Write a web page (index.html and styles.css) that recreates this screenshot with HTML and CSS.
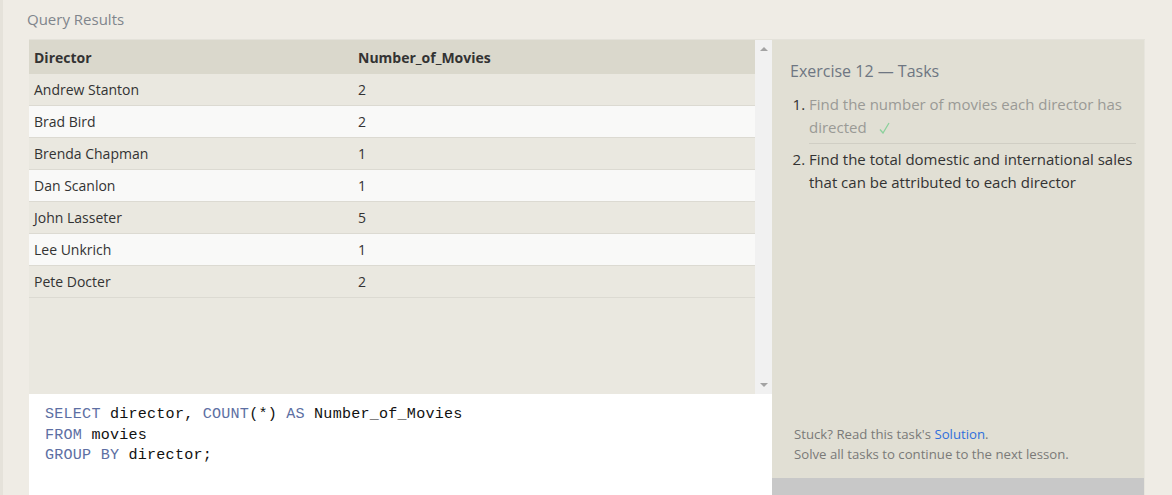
FILE: index.html
```html
<!DOCTYPE html>
<html lang="en">
<head>
<meta charset="utf-8">
<title>Query Results</title>
<link rel="stylesheet" href="styles.css">
</head>
<body>
<div class="page">
  <h2 class="title">Query Results</h2>
  <div class="workspace">
    <div class="left">
      <div class="results">
        <div class="table-wrap">
          <table class="grid">
            <colgroup><col class="c1"><col class="c2"></colgroup>
            <thead>
              <tr><th>Director</th><th>Number_of_Movies</th></tr>
            </thead>
            <tbody>
              <tr><td>Andrew Stanton</td><td>2</td></tr>
              <tr><td>Brad Bird</td><td>2</td></tr>
              <tr><td>Brenda Chapman</td><td>1</td></tr>
              <tr><td>Dan Scanlon</td><td>1</td></tr>
              <tr><td>John Lasseter</td><td>5</td></tr>
              <tr><td>Lee Unkrich</td><td>1</td></tr>
              <tr><td>Pete Docter</td><td>2</td></tr>
            </tbody>
          </table>
        </div>
        <div class="scrollbar">
          <span class="arrow up"></span>
          <span class="arrow down"></span>
        </div>
      </div>
      <div class="editor">
<pre class="code"><span class="kw">SELECT</span> director, <span class="kw">COUNT</span>(*) <span class="kw">AS</span> Number_of_Movies
<span class="kw">FROM</span> movies
<span class="kw">GROUP BY</span> director;</pre>
      </div>
    </div>
    <div class="tasks">
      <div class="tasks-body">
        <h3 class="tasks-title">Exercise 12 — Tasks</h3>
        <ol class="task-list">
          <li class="done">Find the number of movies each director has directed<svg class="check" width="11" height="12" viewBox="0 0 11 12" aria-label="done"><path d="M1 7.5 L4 11 L10 1" fill="none" stroke="#8cd19c" stroke-width="1.3"/></svg></li>
          <li>Find the total domestic and international sales that can be attributed to each director</li>
        </ol>
        <div class="help">
          <p>Stuck? Read this task's <a href="#" class="link">Solution</a>.</p>
          <p>Solve all tasks to continue to the next lesson.</p>
        </div>
      </div>
      <div class="tasks-bar"></div>
    </div>
  </div>
</div>
</body>
</html>
```

FILE: styles.css
```css
html, body {
  margin: 0;
  padding: 0;
  height: 100%;
  overflow: hidden;
}

body {
  background: #efece5;
  font-family: "Open Sans", "Noto Sans", sans-serif;
  color: #333;
  border-left: 3px solid #e5e2da;
  box-sizing: border-box;
}

.page {
  padding-left: 26px;
}

.title {
  margin: 0 0 0 -2px;
  height: 39px;
  padding-top: 8px;
  box-sizing: border-box;
  font-size: 15px;
  font-weight: 400;
  line-height: 22px;
  color: #80858c;
}

.workspace {
  display: flex;
  width: 1116px;
  height: 456px;
  border-top: 1px solid #e4e2da;
  box-sizing: border-box;
}

.left {
  width: 743px;
  display: flex;
  flex-direction: column;
}

.results {
  height: 354px;
  display: flex;
  background: #eae8e0;
}

.table-wrap {
  flex: 1;
  overflow: hidden;
}

.grid {
  width: 726px;
  table-layout: fixed;
  border-collapse: collapse;
  font-size: 14px;
}

.grid .c1 { width: 324px; }

.grid th {
  text-align: left;
  font-weight: 700;
  background: #dad8cc;
  height: 34px;
  padding: 0 5px;
  color: #333;
}

.grid td {
  height: 31px;
  padding: 0 5px;
  border-bottom: 1px solid #dcdad2;
  color: #333;
}

.grid tbody tr:nth-child(odd) td { background: #eae8e0; }
.grid tbody tr:nth-child(even) td { background: #f9f9f8; }

.scrollbar {
  width: 17px;
  background: #f1f1f1;
  display: flex;
  flex-direction: column;
  justify-content: space-between;
  align-items: center;
  padding: 7px 0 7px;
  box-sizing: border-box;
}

.arrow {
  width: 0;
  height: 0;
  border-left: 4px solid transparent;
  border-right: 4px solid transparent;
}

.arrow.up { border-bottom: 4px solid #a3a3a3; }
.arrow.down { border-top: 4px solid #a3a3a3; }

.editor {
  flex: 1;
  background: #fff;
  padding: 10px 0 0 16px;
}

.code {
  margin: 0;
  font-family: "Liberation Mono", "DejaVu Sans Mono", monospace;
  font-size: 15.1px;
  letter-spacing: 0.22px;
  line-height: 20.5px;
  color: #111;
}

.kw { color: #5d6fa3; }

.tasks {
  width: 372px;
  display: flex;
  flex-direction: column;
  border-right: 1px solid #e7e5dd;
}

.tasks-body {
  height: 438px;
  background: #e1dfd4;
  padding: 20px 8px 14px 18px;
  box-sizing: border-box;
  display: flex;
  flex-direction: column;
}

.tasks-title {
  margin: 0;
  font-size: 16px;
  font-weight: 400;
  line-height: 22px;
  color: #6e7682;
}

.task-list {
  margin: 11px 0 0;
  padding-left: 19px;
  font-size: 15px;
  line-height: 23px;
}

.task-list li {
  padding: 0 0 4px;
}

.task-list li + li {
  border-top: 1px solid #d0cec4;
  padding-top: 4px;
}

.task-list li.done {
  color: #9a9a96;
}

.task-list li.done::marker { color: #333; }

.check {
  margin-left: 12px;
  vertical-align: -1px;
}

.help {
  margin-top: auto;
  padding-left: 4px;
  font-size: 13.2px;
  line-height: 20px;
  color: #7a7a78;
}

.help p { margin: 0; }

.link {
  color: #2f6fdc;
  text-decoration: none;
}

.tasks-bar {
  flex: 1;
  background: #c8c8c8;
}
```
